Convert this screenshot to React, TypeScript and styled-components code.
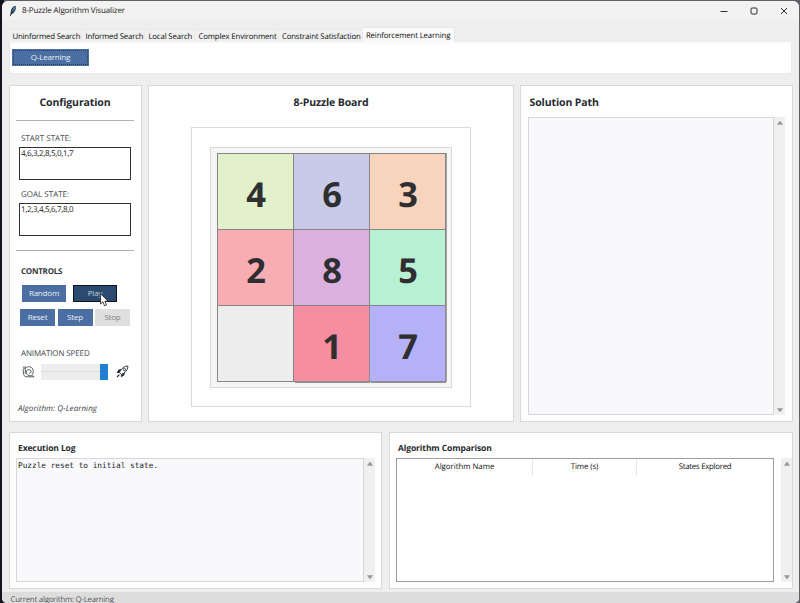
import React from "react";
import styled, { createGlobalStyle } from "styled-components";

const GlobalStyle = createGlobalStyle`
  *, *::before, *::after { box-sizing: border-box; }
  body {
    margin: 0;
    overflow: hidden;
    background: #17151f;
    font-family: "Open Sans", "Noto Sans", sans-serif;
    font-size: 7.8px;
    line-height: 10px;
    letter-spacing: -0.14px;
    color: #1c1c1c;
    text-rendering: geometricPrecision;
  }
`;

const Screen = styled.div`
  width: 800px;
  height: 603px;
  padding: 1px 1px 0 2px;
  background: linear-gradient(90deg, #14131c 0 4px, #625e68 4px);
`;

const Window = styled.div`
  height: 602px;
  display: flex;
  flex-direction: column;
  background: #eeeeee;
  border-radius: 6px 6px 5px 5px;
  overflow: hidden;
`;

const TitleBar = styled.header`
  height: 19px;
  flex: none;
  display: flex;
  align-items: center;
  padding: 0 11px 0 7px;
  background: #f2f2f2;
`;

const AppTitle = styled.span`
  flex: 1;
  font-size: 8px;
  padding-left: 5px;
  letter-spacing: -0.15px;
`;

const WindowButtons = styled.div`
  display: flex;
  gap: 22px;
`;

const TabBar = styled.nav`
  height: 22px;
  flex: none;
  display: flex;
  align-items: flex-end;
  padding-left: 7px;
`;

const Tab = styled.div<{ $w: number; $active?: boolean; $track?: number }>`
  width: ${(p) => p.$w}px;
  height: ${(p) => (p.$active ? 15 : 13)}px;
  padding: ${(p) => (p.$active ? "3px 0 0 3.4px" : "2px 0 0 3.4px")};
  border: 1px solid ${(p) => (p.$active ? "#e8e8e8" : "#e9e9e9")};
  border-width: 1px 1px 0 0;
  background: ${(p) => (p.$active ? "#fafafa" : "#f0f0f0")};
  letter-spacing: ${(p) => p.$track ?? -0.14}px;
  color: #0c0c0c;
  white-space: nowrap;
`;

const TabPane = styled.section`
  height: 32px;
  flex: none;
  margin: 0 7px;
  padding: 6px 2px;
  background: #fefefe;
  border: 1px solid #e9e9e9;
  border-top-color: #f8f8f8;
`;

const Button = styled.button<{ $w: number; $tone?: "pressed" | "disabled"; $focus?: boolean }>`
  width: ${(p) => p.$w}px;
  height: 17px;
  flex: none;
  display: flex;
  align-items: center;
  justify-content: center;
  padding: 0 0 1px;
  font: inherit;
  font-size: 8px;
  letter-spacing: -0.2px;
  color: ${(p) => (p.$tone === "disabled" ? "#858585" : p.$tone === "pressed" ? "#c3cedb" : "#e9eef6")};
  background: ${(p) => (p.$tone === "disabled" ? "#dfdfdf" : p.$tone === "pressed" ? "#2b4a6f" : "#4b6ea3")};
  border: ${(p) => (p.$tone === "pressed" ? "1px solid #0b1420" : "0")};
  outline: ${(p) => (p.$focus ? "1px dotted #263d5f" : "none")};
  outline-offset: -2px;
`;

const Panel = styled.section`
  display: flex;
  flex-direction: column;
  background: #fefefe;
  border: 1px solid #d8d9da;
`;

const TopRow = styled.main`
  height: 337px;
  flex: none;
  display: grid;
  grid-template-columns: 133px 366px 273px;
  gap: 6px;
  margin: 11px 0 0 7px;
`;

const BottomRow = styled.div`
  height: 157px;
  flex: none;
  display: grid;
  grid-template-columns: 373px 404px;
  gap: 7px;
  margin: 10px 0 0 7px;
`;

const ConfigPanel = styled(Panel)`
  padding: 10px 7px 0 6px;
`;

const PanelTitle = styled.h2<{ $center?: boolean; $small?: boolean }>`
  margin: 0;
  height: 14px;
  line-height: 14px;
  font-size: ${(p) => (p.$small ? 8.5 : 10.5)}px;
  letter-spacing: -0.11px;
  text-align: ${(p) => (p.$center ? "center" : "left")};
  color: #262a2e;
`;

const Divider = styled.hr<{ $top: number }>`
  width: 118px;
  height: 1px;
  flex: none;
  margin: ${(p) => p.$top}px 0 0;
  border: 0;
  background: #b0b1b3;
`;

const FieldLabel = styled.label<{ $top: number; $track?: number }>`
  display: block;
  height: 10px;
  margin: ${(p) => p.$top}px 0 0 5px;
  font-size: 8px;
  letter-spacing: ${(p) => p.$track ?? 0}px;
  color: #45484c;
`;

const SectionTitle = styled.h3`
  margin: 16px 0 0 5px;
  height: 10px;
  font-size: 8px;
  letter-spacing: -0.25px;
  color: #33373b;
`;

const StateInput = styled.div`
  width: 112px;
  height: 33px;
  flex: none;
  margin: 3px 0 0 3px;
  padding: 1px 0 0 1px;
  border: 1px solid #303030;
  font-size: 8px;
  letter-spacing: -0.33px;
  color: #1a1a1a;
`;

const ButtonRow = styled.div<{ $top: number; $left: number; $gap: number }>`
  display: flex;
  gap: ${(p) => p.$gap}px;
  margin: ${(p) => p.$top}px 0 0 ${(p) => p.$left}px;
`;

const PointerAnchor = styled.div`
  position: relative;
  display: flex;
`;

const Pointer = styled.svg`
  position: absolute;
  left: 27px;
  top: 8px;
`;

const SpeedRow = styled.div`
  display: flex;
  align-items: center;
  margin: 4px 0 0 6px;
  height: 17px;
`;

const Track = styled.div`
  width: 67px;
  height: 16px;
  display: flex;
  align-items: center;
  justify-content: flex-end;
  margin: 0 8px 0 6px;
  background: linear-gradient(#dcdcdc, #dcdcdc) 0 7px / 100% 1px no-repeat #ededed;
`;

const Thumb = styled.div`
  width: 8px;
  height: 16px;
  background: #217fd2;
`;

const AlgorithmNote = styled.p`
  margin: 24px 0 0 2px;
  font-size: 8px;
  font-style: italic;
  letter-spacing: 0.06px;
  color: #3d4043;
`;

const BoardPanel = styled(Panel)`
  padding-top: 10px;
  align-items: center;
`;

const BoardFrame = styled.div`
  width: 280px;
  height: 280px;
  margin-top: 17px;
  padding: 19px 0 0 18px;
  border: 1px solid #d9dadb;
`;

const BoardInset = styled.div`
  width: 242px;
  height: 241px;
  padding: 5px 6px;
  border: 1px solid #d8d9da;
  background: #f5f5f5;
`;

const Board = styled.div`
  width: 229px;
  height: 229px;
  display: grid;
  grid-template-columns: repeat(3, 75px);
  grid-template-rows: repeat(3, 75px);
  gap: 1px;
  padding: 1px;
  background: #858585;
  box-shadow: 1px 0 0 #a4a4a4;
`;

const Tile = styled.div<{ $bg: string }>`
  display: flex;
  align-items: center;
  justify-content: center;
  padding: 6px 0 0 1px;
  font-size: 34.5px;
  line-height: 34px;
  font-weight: 700;
  letter-spacing: 0;
  color: #2f2f31;
  background: ${(p) => p.$bg};
  &:nth-child(n + 8) { box-shadow: 1px 2px 0 #8e8e8e; }
`;

const SolutionPanel = styled(Panel)`
  padding: 10px 7px 6px 6.5px;
`;

const LogPanel = styled(Panel)`
  padding: 9px 6px 6px 6px;
`;

const ComparePanel = styled(Panel)`
  padding: 9px 0 6px 6px;
`;

const TitleIndent = styled.div`
  padding-left: 2px;
`;

const ScrollArea = styled.div<{ $top: number; $gap?: number }>`
  flex: 1;
  min-height: 0;
  display: flex;
  gap: ${(p) => p.$gap ?? 0}px;
  margin-top: ${(p) => p.$top}px;
`;

const TextView = styled.div`
  flex: 1;
  padding: 2px 1px;
  background: #f9f9fb;
  border: 1px solid #d6d7d8;
  font-family: "DejaVu Sans Mono", monospace;
  font-size: 7.75px;
  letter-spacing: 0;
  color: #20242a;
`;

const ScrollTrack = styled.div`
  width: 11px;
  flex: none;
  display: flex;
  flex-direction: column;
  align-items: center;
  justify-content: space-between;
  padding: 4px 0 3px;
  background: #f0f0f0;
`;

const Table = styled.div`
  width: 378px;
  flex: none;
  border: 1px solid #9b9da0;
`;

const HeaderRow = styled.div`
  display: grid;
  grid-template-columns: 136px 104px 136px;
  height: 16px;
  line-height: 17px;
`;

const HeaderCell = styled.div<{ $track?: number }>`
  text-align: center;
  color: #101010;
  letter-spacing: ${(p) => p.$track ?? 0}px;
  border-right: 1px solid #e6e6e8;
  &:last-child { border-right: 0; }
`;

const StatusBar = styled.footer`
  flex: 1;
  margin-top: 3px;
  padding: 3px 0 0 8.5px;
  background: #dddddd;
  letter-spacing: -0.22px;
  color: #55585b;
  overflow: hidden;
  white-space: nowrap;
`;

const Feather = () => (
  <svg width="8" height="12" viewBox="0 0 8 12">
    <path d="M1.2 11 L1.8 6 C2.3 3.2 4.3 1 6.5 .8 C7.6 3.2 6.7 5.8 4.4 8.2 L2.3 8.9Z" fill="#2d3c4c" />
    <path d="M2.7 7 C3.2 4.4 4.5 2.5 6.2 1.5 C6.5 3.6 5.3 5.3 3.7 7.1Z" fill="#5c9ed3" />
    <path d="M1.2 11.2 L4.9 3.4" stroke="#1b1b20" strokeWidth=".7" />
  </svg>
);

const Arrow = ({ down }: { down?: boolean }) => (
  <svg width="6" height="4" viewBox="0 0 6 4">
    <path d={down ? "M0 .2 H6 L3.7 3.7 H2.3Z" : "M2.3 .3 H3.7 L6 3.8 H0Z"} fill="#9a9a9a" />
  </svg>
);

const Scrollbar = () => (
  <ScrollTrack>
    <Arrow />
    <Arrow down />
  </ScrollTrack>
);

const Snail = () => (
  <svg width="13" height="13" viewBox="0 0 13 13" fill="none" stroke="#34383c" strokeWidth=".8">
    <path d="M4 3.2 C5.4 1 9 1.4 10.4 3.5 C12 6 11.3 9.4 9.2 10.5 C6.8 11.2 4.5 10.2 4.2 7.3 C4.2 4.9 6.5 3.9 8.3 5 C9.7 6.3 9 8.4 7.2 8.3" />
    <path d="M1 1.5 L2.2 3.1 M3.4 1.2 L3.2 3.1 M3.3 3.1 C1.4 2.8 .8 4.4 1.3 5.8 L1.8 9.8 C2.1 11.2 3.4 11.8 5 11.8 H12 L10.6 10.2 M3.3 3.1 V8.5" />
  </svg>
);

const Rocket = () => (
  <svg width="13" height="13" viewBox="0 0 13 13" fill="none" stroke="#25292d" strokeWidth=".9">
    <path d="M11.9 1 C8.9 1 6.5 2.6 4.7 5.2 L3.4 7.5 L5.4 9.5 L7.8 8.2 C10.4 6.4 12 4 11.9 1Z" />
    <circle cx="8.4" cy="4.6" r="1.2" />
    <path d="M5.1 4.6 L2.8 5 L1.2 7.6 L3.6 7.3 M8.3 7.8 L7.9 10.1 L5.3 11.7 L5.5 9.4" fill="#25292d" />
    <path d="M3.3 9.6 L1 12" strokeWidth="1.2" />
  </svg>
);

const tabs = [
  { label: "Uninformed Search", width: 73, track: -0.17 },
  { label: "Informed Search", width: 63, track: -0.17 },
  { label: "Local Search", width: 50 },
  { label: "Complex Environment", width: 83.5 },
  { label: "Constraint Satisfaction", width: 84 },
];

const tiles = [
  { n: "4", bg: "#e2f1cb" }, { n: "6", bg: "#c8cae7" }, { n: "3", bg: "#f9d4bd" },
  { n: "2", bg: "#f8adb2" }, { n: "8", bg: "#dcb1e0" }, { n: "5", bg: "#b8f0d4" },
  { n: "", bg: "#ededed" }, { n: "1", bg: "#f58ea0" }, { n: "7", bg: "#b4b1f8" },
];

export default function App() {
  return (
    <>
      <GlobalStyle />
      <Screen>
        <Window>
          <TitleBar>
            <Feather />
            <AppTitle>8-Puzzle Algorithm Visualizer</AppTitle>
            <WindowButtons>
              <svg width="8" height="8" viewBox="0 0 8 8"><path d="M.5 4.5 H7.5" stroke="#303030" /></svg>
              <svg width="8" height="8" viewBox="0 0 8 8"><rect x="1" y="1" width="6" height="6" rx="1" fill="none" stroke="#303030" /></svg>
              <svg width="8" height="8" viewBox="0 0 8 8"><path d="M1 1 L7 7 M7 1 L1 7" stroke="#303030" /></svg>
            </WindowButtons>
          </TitleBar>
          <TabBar>
            {tabs.map((t) => (
              <Tab key={t.label} $w={t.width} $track={t.track}>{t.label}</Tab>
            ))}
            <Tab $w={92} $active>Reinforcement Learning</Tab>
          </TabBar>
          <TabPane>
            <Button $w={77} $focus>Q-Learning</Button>
          </TabPane>
          <TopRow>
            <ConfigPanel>
              <PanelTitle $center>Configuration</PanelTitle>
              <Divider $top={10} />
              <FieldLabel $top={13}>START STATE:</FieldLabel>
              <StateInput>4,6,3,2,8,5,0,1,7</StateInput>
              <FieldLabel $top={10}>GOAL STATE:</FieldLabel>
              <StateInput>1,2,3,4,5,6,7,8,0</StateInput>
              <Divider $top={14} />
              <SectionTitle>CONTROLS</SectionTitle>
              <ButtonRow $top={8} $left={6} $gap={7}>
                <Button $w={44}>Random</Button>
                <PointerAnchor>
                  <Button $w={44} $tone="pressed">Play</Button>
                  <Pointer width="9" height="14" viewBox="0 0 9 14">
                    <path d="M.6 .8 V11 L3 8.8 L4.5 12.8 L6.5 12 L4.9 8.2 H8.1Z" fill="#fff" stroke="#151515" strokeWidth=".8" />
                  </Pointer>
                </PointerAnchor>
              </ButtonRow>
              <ButtonRow $top={7} $left={4} $gap={2.5}>
                <Button $w={35}>Reset</Button>
                <Button $w={35}>Step</Button>
                <Button $w={35} $tone="disabled">Stop</Button>
              </ButtonRow>
              <FieldLabel $top={23} $track={-0.12}>ANIMATION SPEED</FieldLabel>
              <SpeedRow>
                <Snail />
                <Track><Thumb /></Track>
                <Rocket />
              </SpeedRow>
              <AlgorithmNote>Algorithm: Q-Learning</AlgorithmNote>
            </ConfigPanel>
            <BoardPanel>
              <PanelTitle $center>8-Puzzle Board</PanelTitle>
              <BoardFrame>
                <BoardInset>
                  <Board>
                    {tiles.map((t, i) => (
                      <Tile key={i} $bg={t.bg}>{t.n}</Tile>
                    ))}
                  </Board>
                </BoardInset>
              </BoardFrame>
            </BoardPanel>
            <SolutionPanel>
              <TitleIndent><PanelTitle>Solution Path</PanelTitle></TitleIndent>
              <ScrollArea $top={7}>
                <TextView />
                <Scrollbar />
              </ScrollArea>
            </SolutionPanel>
          </TopRow>
          <BottomRow>
            <LogPanel>
              <TitleIndent><PanelTitle $small>Execution Log</PanelTitle></TitleIndent>
              <ScrollArea $top={2}>
                <TextView>Puzzle reset to initial state.</TextView>
                <Scrollbar />
              </ScrollArea>
            </LogPanel>
            <ComparePanel>
              <TitleIndent><PanelTitle $small>Algorithm Comparison</PanelTitle></TitleIndent>
              <ScrollArea $top={2} $gap={7}>
                <Table>
                  <HeaderRow>
                    <HeaderCell>Algorithm Name</HeaderCell>
                    <HeaderCell $track={-0.1}>Time (s)</HeaderCell>
                    <HeaderCell $track={-0.25}>States Explored</HeaderCell>
                  </HeaderRow>
                </Table>
                <Scrollbar />
              </ScrollArea>
            </ComparePanel>
          </BottomRow>
          <StatusBar>Current algorithm: Q-Learning</StatusBar>
        </Window>
      </Screen>
    </>
  );
}
